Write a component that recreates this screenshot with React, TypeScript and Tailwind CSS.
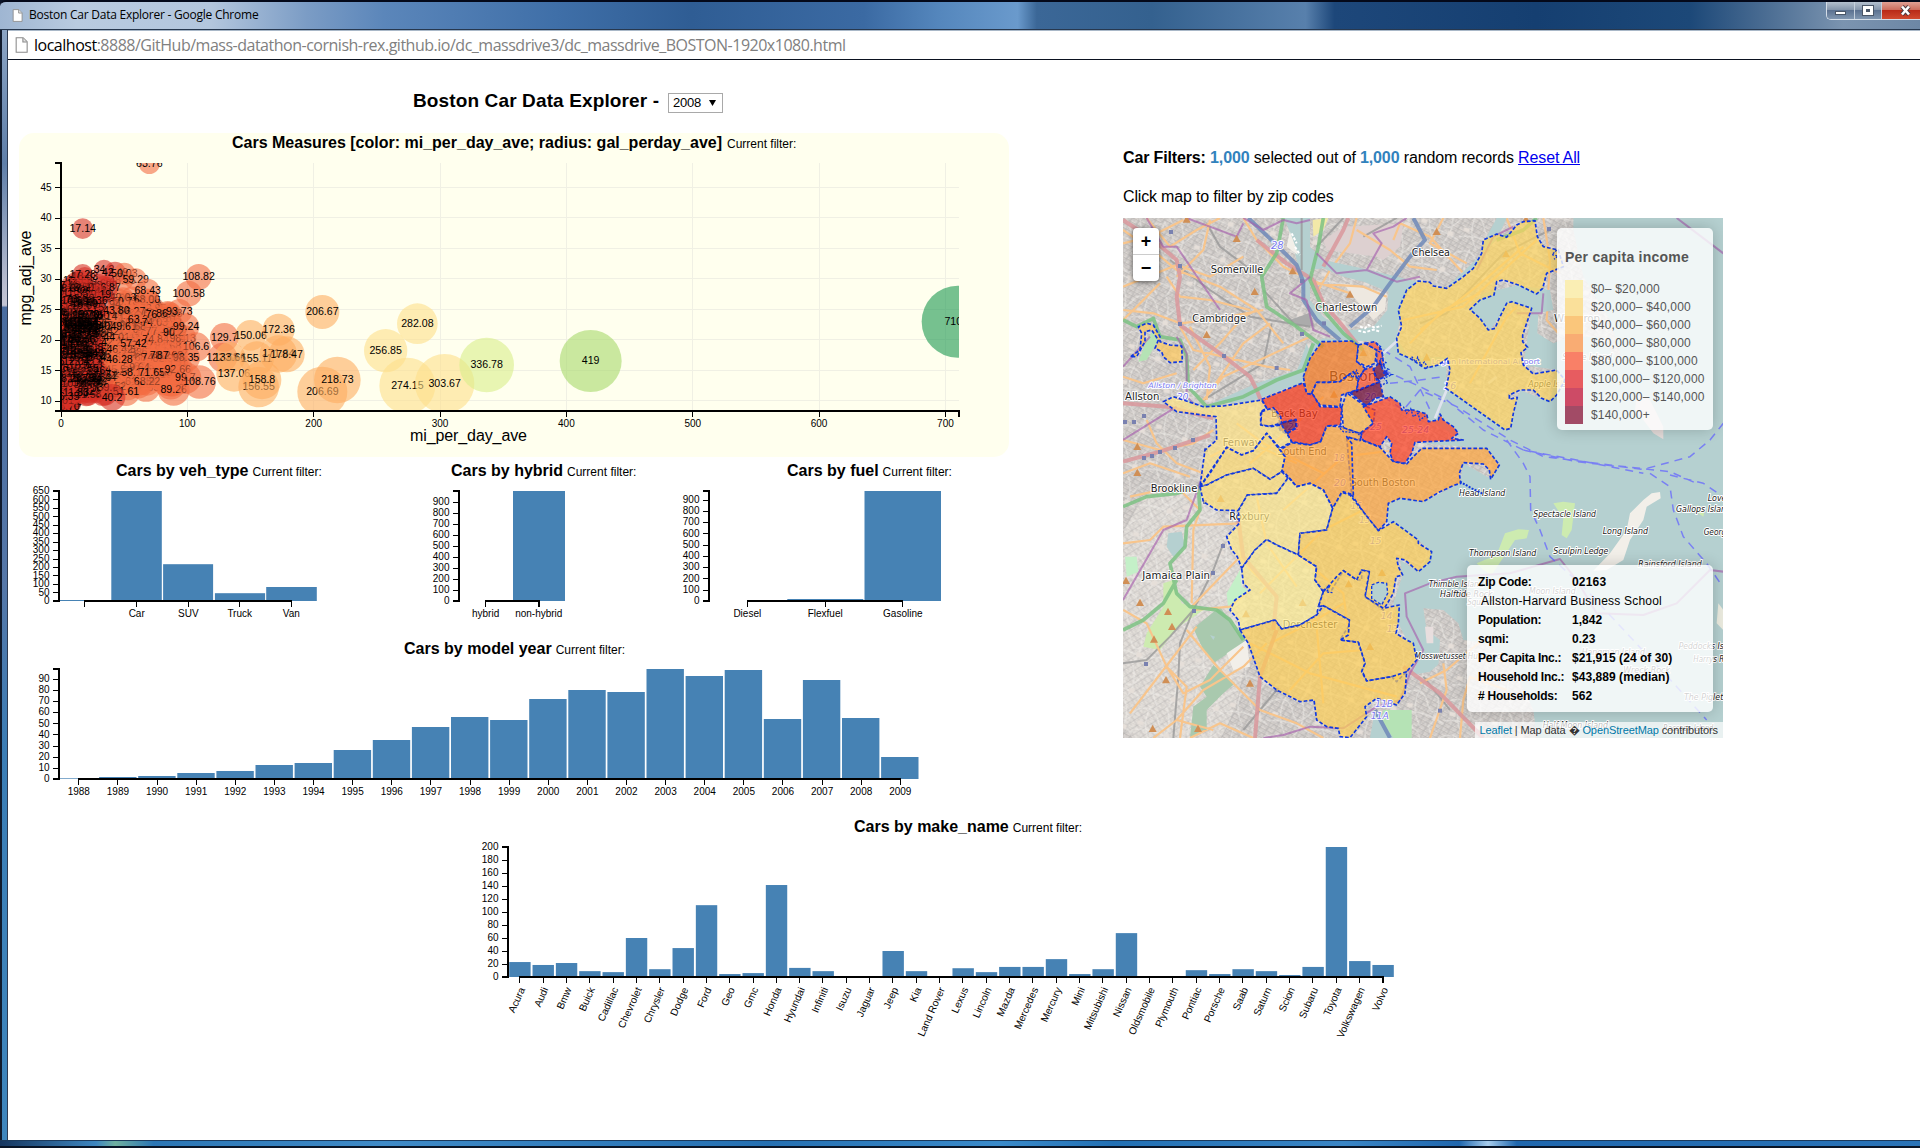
import React from "react";

const R = "#d73027";
const O = "#f46d43";
const A = "#fdae61";
const Y = "#fee08b";
const BAR = "#4682b4";
const ARIAL = "'Liberation Sans', Arial, sans-serif";

/* ---------- shared chart pieces ---------- */

function ChartTitle({ title, className }: { title: string; className: string }) {
  return (
    <div className={"h-7 pt-[4px] whitespace-nowrap leading-5 text-black " + className}>
      <strong className="text-[16px]">{title}</strong>
      <span className="ml-1 text-[12px]">Current filter:</span>
    </div>
  );
}

function YAxis({ x, top, bottom, ticks }: { x: number; top: number; bottom: number; ticks: [number, number][] }) {
  return (
    <g>
      <path d={`M${x - 6} ${top}H${x}V${bottom}H${x - 6}`} fill="none" stroke="#000" strokeWidth={2} />
      {ticks.map(([v, y]) => (
        <g key={v}>
          <line x1={x - 6} x2={x} y1={Math.round(y) + 0.5} y2={Math.round(y) + 0.5} stroke="#000" />
          <text x={x - 9.5} y={y + 3.2} fontSize={10} textAnchor="end">{v}</text>
        </g>
      ))}
    </g>
  );
}

function XAxis({ y, from, to, ticks, labelDy = 16 }: { y: number; from: number; to: number; ticks: [string, number][]; labelDy?: number }) {
  return (
    <g>
      <line x1={from} x2={to} y1={y} y2={y} stroke="#000" strokeWidth={2} />
      {ticks.map(([t, x], i) => (
        <g key={i}>
          <line x1={Math.floor(x) + 0.5} x2={Math.floor(x) + 0.5} y1={y} y2={y + 6} stroke="#000" />
          <text x={x} y={y + labelDy} fontSize={10} textAnchor="middle">{t}</text>
        </g>
      ))}
    </g>
  );
}

const range = (n: number) => Array.from({ length: n }, (_, i) => i);

/* ---------- bubble chart ---------- */

type Bubble = [number, number, number, string, string];

function makeCluster(): Bubble[] {
  let seed = 4211;
  const rnd = () => {
    seed = (seed * 1664525 + 1013904223) % 4294967296;
    return seed / 4294967296;
  };
  const gauss = () => (rnd() + rnd() + rnd() + rnd() - 2) * 1.7;
  const out: Bubble[] = [];
  for (let i = 0; i < 760; i++) {
    const wide = rnd() < 0.24;
    const v = wide ? 34 + Math.pow(rnd(), 1.2) * 56 : 1 + Math.min(34, Math.abs(gauss()) * 8 + rnd() * 17);
    const cap = v < 12 ? 28.5 + v * 0.15 : v < 45 ? 30.5 : 30.5 - (v - 45) * 0.15;
    let m = 19.3 + gauss() * 5.2;
    const low = v < 10 ? 8.6 : v < 36 ? 10.5 : 12.2;
    if (m > cap) m = cap - rnd() * 6;
    if (m < low) m = low + rnd() * 6;
    out.push([61 + v * 1.263, 411 - (m - 8.4) * 6.105, 9.3 + (0.9 * v) / m, v.toFixed(2), v < 37 ? R : O]);
  }
  return out;
}

const c = (x: number, y: number, r: number, t: string, f: string): Bubble => [x / 3, 120 + y / 3, r / 3, t, f];

const CLUSTER = makeCluster();

const BUBBLES: Bubble[] = [
  c(448, 130, 32, "63.76", O),
  c(248, 326, 31, "17.14", R),
  c(248, 463, 31, "17.28", R),
  c(312, 450, 31, "34.2", R),
  c(345, 458, 33, "42.49", R),
  c(373, 461, 33, "50.03", O),
  c(407, 478, 33, "59.29", O),
  c(443, 512, 36, "68.43", O),
  c(464, 609, 36, "74.03", O),
  c(476, 584, 36, "76.88", O),
  c(508, 582, 37, "86.93", O),
  c(538, 575, 38, "93.73", O),
  c(596, 471, 39, "108.82", O),
  c(566, 521, 39, "100.58", O),
  c(548, 655, 41, "98.13", O),
  c(520, 638, 38, "90.2", O),
  c(558, 620, 40, "99.24", O),
  c(588, 681, 44, "106.6", O),
  c(480, 706, 40, "78.2", O),
  c(510, 706, 40, "87.68", O),
  c(558, 714, 42, "98.35", O),
  c(441, 785, 42, "68.22", O),
  c(455, 757, 42, "71.65", O),
  c(533, 748, 45, "92.66", O),
  c(521, 809, 48, "89.26", O),
  c(556, 774, 48, "99.7", O),
  c(598, 786, 50, "108.76", O),
  c(378, 816, 42, "51.61", O),
  c(336, 832, 40, "40.2", R),
  c(668, 712, 44, "122.68", O),
  c(673, 652, 43, "129.7", O),
  c(690, 712, 46, "133.66", A),
  c(752, 646, 46, "150.06", A),
  c(836, 629, 48, "172.36", A),
  c(770, 716, 52, "155.11", A),
  c(835, 702, 56, "171.64", A),
  c(860, 703, 54, "178.47", A),
  c(702, 762, 53, "137.06", A),
  c(776, 801, 61, "156.55", A),
  c(786, 780, 58, "158.8", A),
  c(967, 576, 51, "206.67", A),
  c(967, 815, 75, "206.69", A),
  c(1012, 780, 70, "218.73", A),
  c(1157, 692, 65, "256.85", Y),
  c(1252, 611, 61, "282.08", Y),
  c(1222, 797, 84, "274.15", Y),
  c(1334, 791, 89, "303.67", Y),
  c(1460, 735, 82, "336.78", "#d9ef8b"),
  c(1772, 723, 93, "419", "#a6d96a"),
  c(2873, 605, 108, "710.4", "#1a9850"),
];

function Bubbles({ data }: { data: Bubble[] }) {
  return (
    <>
      {data.map(([x, y, r, t, f], i) => (
        <g key={i}>
          <circle cx={x} cy={y} r={r} fill={f} fillOpacity={0.6} />
          <text x={x} y={y + 3.2} fontSize={10.6} textAnchor="middle">{t}</text>
        </g>
      ))}
    </>
  );
}

function BubbleChart() {
  const xt = range(8).map((i): [string, number] => [String(i * 100), 61 + i * 126.35]);
  const yt = range(8).map((i): [number, number] => [10 + i * 5, 400.8 - i * 30.5]);
  return (
    <section className="ml-[11px] h-[324px] w-[990px] rounded-[15px] bg-[#ffffee]">
      <div className="h-[27px] pl-[213px] leading-[20px] whitespace-nowrap">
        <strong className="text-[16px]">Cars Measures [color: mi_per_day_ave; radius: gal_perday_ave]</strong>
        <span className="ml-[5px] text-[12px]">Current filter:</span>
      </div>
      <svg className="block" width={990} height={297} viewBox="19 160 990 297" fontFamily={ARIAL}>
        <defs>
          <clipPath id="plot"><rect x={61} y={163} width={898} height={247.5} /></clipPath>
        </defs>
        {xt.slice(1).map(([t, x]) => <line key={t} x1={Math.floor(x) + 0.5} x2={Math.floor(x) + 0.5} y1={163} y2={411} stroke="#f0f0e4" />)}
        {yt.map(([t, y]) => <line key={t} x1={61} x2={959} y1={Math.floor(y) + 0.5} y2={Math.floor(y) + 0.5} stroke="#f0f0e4" />)}
        <g clipPath="url(#plot)">
          <Bubbles data={CLUSTER} />
          {CLUSTER.filter((b, i) => i % 6 === 0 && b[0] < 106).map(([x, y, , t], i) => (
            <text key={i} x={x} y={y + 3.2} fontSize={10.6} textAnchor="middle" fillOpacity={0.7}>{t}</text>
          ))}
          <Bubbles data={BUBBLES} />
        </g>
        <YAxis x={61} top={163} bottom={411} ticks={yt} />
        <XAxis y={411} from={60} to={960} ticks={xt} />
        <line x1={959} x2={959} y1={410} y2={417} stroke="#000" strokeWidth={2} />
        <text x={468.5} y={440.5} fontSize={16} textAnchor="middle" textLength={117}>mi_per_day_ave</text>
        <text transform="translate(31 278) rotate(-90)" fontSize={16} textAnchor="middle" textLength={95}>mpg_adj_ave</text>
      </svg>
    </section>
  );
}

/* ---------- bar charts ---------- */

type Rect = [number, number, number];

function Bars({ bars, bottom }: { bars: Rect[]; bottom: number }) {
  return (
    <g>
      {bars.map(([x, w, y], i) => <rect key={i} x={x} y={y} width={w} height={bottom - y} fill={BAR} />)}
    </g>
  );
}

function VehType() {
  return (
    <section className="w-[432px]">
      <ChartTitle title="Cars by veh_type" className="pl-[108px]" />
      <svg className="block" width={432} height={150} viewBox="8 485 432 150" fontFamily={ARIAL}>
        <Bars bottom={601} bars={[[60, 50, 600], [111.3, 50.5, 491], [163.1, 50, 564.2], [214.9, 50.2, 593.2], [266.2, 50.6, 587]]} />
        <YAxis x={59} top={491} bottom={601} ticks={range(14).map((i): [number, number] => [i * 50, 600.8 - i * 8.45])} />
        <XAxis y={601} from={84} to={292} ticks={[["", 84.4], ["Car", 136.7], ["SUV", 188.3], ["Truck", 239.7], ["Van", 291.3]]} />
      </svg>
    </section>
  );
}

function Hybrid() {
  return (
    <section className="w-[250px]">
      <ChartTitle title="Cars by hybrid" className="pl-[11px]" />
      <svg className="block overflow-visible" width={250} height={150} viewBox="440 485 250 150" fontFamily={ARIAL}>
        <Bars bottom={601} bars={[[513, 52, 491]]} />
        <YAxis x={459} top={491} bottom={601} ticks={range(10).map((i): [number, number] => [i * 100, 600.8 - i * 11])} />
        <XAxis y={601} from={485} to={540} ticks={[["hybrid", 485.6], ["non-hybrid", 538.8]]} />
        <line x1={539} x2={539} y1={600} y2={607} stroke="#000" strokeWidth={2} />
      </svg>
    </section>
  );
}

function Fuel() {
  return (
    <section className="w-[325px]">
      <ChartTitle title="Cars by fuel" className="pl-[97px]" />
      <svg className="block overflow-visible" width={325} height={150} viewBox="690 485 325 150" fontFamily={ARIAL}>
        <Bars bottom={601} bars={[[787.3, 76, 599], [864.5, 76.5, 491]]} />
        <YAxis x={709} top={491} bottom={601} ticks={range(10).map((i): [number, number] => [i * 100, 600.8 - i * 11.22])} />
        <XAxis y={601} from={747} to={903} ticks={[["Diesel", 747.3], ["Flexfuel", 825.2], ["Gasoline", 902.8]]} />
      </svg>
    </section>
  );
}

const YEAR_TOPS = [985, 981, 978, 969, 963, 945, 939, 900, 870, 831, 801, 810, 747, 720, 726, 657, 678, 660, 807, 690, 804, 921];

function ModelYear() {
  return (
    <section>
      <ChartTitle title="Cars by model year" className="pl-[396px]" />
      <svg className="block" width={1007} height={150} viewBox="8 663 1007 150" fontFamily={ARIAL}>
        <Bars bottom={779} bars={YEAR_TOPS.map((t, i): Rect => [60 + i * 39.1, 37.4, 450 + t / 3])} />
        <YAxis x={59} top={669} bottom={779} ticks={range(10).map((i): [number, number] => [i * 10, 778.8 - i * 11.1])} />
        <XAxis y={779} from={78} to={901} ticks={YEAR_TOPS.map((_, i): [string, number] => [String(1988 + i), 78.8 + i * 39.12])} />
      </svg>
    </section>
  );
}

const MAKES: [string, number][] = [
  ["Acura", 23], ["Audi", 18.5], ["Bmw", 21.5], ["Buick", 9], ["Cadillac", 7.5], ["Chevrolet", 60], ["Chrysler", 12],
  ["Dodge", 44.5], ["Ford", 110.5], ["Geo", 4.5], ["Gmc", 6], ["Honda", 141.5], ["Hyundai", 14], ["Infiniti", 9],
  ["Isuzu", 1], ["Jaguar", 1], ["Jeep", 40], ["Kia", 9], ["Land Rover", 1], ["Lexus", 13.5], ["Lincoln", 7.5],
  ["Mazda", 15.5], ["Mercedes", 15.5], ["Mercury", 27.5], ["Mini", 4.5], ["Mitsubishi", 12], ["Nissan", 67.5],
  ["Oldsmobile", 1], ["Plymouth", 1], ["Pontiac", 10.5], ["Porsche", 4.5], ["Saab", 12], ["Saturn", 9], ["Scion", 3],
  ["Subaru", 15.5], ["Toyota", 200], ["Volkswagen", 24.5], ["Volvo", 18.5],
];

function MakeName() {
  return (
    <section className="ml-[452px] w-[960px]">
      <ChartTitle title="Cars by make_name" className="pl-[394px]" />
      <svg className="block" width={960} height={260} viewBox="460 841 960 260" fontFamily={ARIAL}>
        <Bars bottom={977} bars={MAKES.map(([, v], i): Rect => [509.2 + i * 23.33, 21.4, 977 - v * 0.65])} />
        <YAxis x={508} top={847} bottom={977} ticks={range(11).map((i): [number, number] => [i * 20, 976.8 - i * 12.98])} />
        <XAxis y={977} from={519} to={1384} ticks={MAKES.map((_, i): [string, number] => ["", 519.7 + i * 23.33])} />
        <line x1={1383} x2={1383} y1={976} y2={983} stroke="#000" strokeWidth={2} />
        {MAKES.map(([m], i) => (
          <text key={m} transform={`translate(${525.2 + i * 23.33} ${989.2}) rotate(-66)`} fontSize={10.2} textAnchor="end">{m}</text>
        ))}
      </svg>
    </section>
  );
}

/* ---------- map ---------- */

const LAND = [
  "M39 24H525L545 90 560 150 575 210 590 270 620 330 660 370 700 390 640 385 605 400 560 480 440 520 300 582 420 575 580 515 600 445 635 395 725 393 800 393 825 440 822 560 900 600 1060 690 930 700 1130 715 1170 765 1140 805 1060 760 1050 820 940 875 870 865 835 880 830 935 925 990 965 1025 925 1085 870 1050 878 1095 850 1180 865 1240 890 1290 925 1350 905 1395 960 1385 1000 1350 1040 1400 1060 1584H39Z",
  "M600 180L640 175 700 200 760 215 835 245 832 300 790 350 730 360 690 355 640 320 600 270Z",
  "M600 24L600 110 640 150 780 180 880 205 925 215 1010 232 1060 200 1110 160 1125 90 1160 24Z",
  "M1160 90L1190 24H1390V60L1420 200 1500 330 1540 460 1460 380 1380 380 1330 400 1282 370 1285 310 1330 300 1320 240 1225 225 1120 250 1080 298 1140 360 1200 275 1265 295 1240 465 1340 480 1320 575 1230 540 1200 660 1008 535 1010 440 900 445 860 385 880 265 925 213 1010 232Z",
  "M940 1195L1000 1200 1045 1240 1060 1290 1130 1300 1200 1350 1270 1500 1280 1584H900L930 1400 985 1375 990 1290 950 1260Z",
];

const PARKS = [
  ["#cdebb0", "M160 1120L190 1110 215 1180 280 1200 200 1255 150 1320 100 1310 110 1270 160 1190Z"],
  ["#a9c9ae", "M330 1190L385 1270 410 1290 370 1320 310 1360 280 1320 250 1255Z"],
  ["#a9c9ae", "M310 1365L375 1420 340 1450 290 1500 290 1560 240 1584 250 1490 290 1460 270 1430Z"],
  ["#c4f0c8", "M390 1080L395 1130 415 1140 355 1200 350 1150Z"],
  ["#c4f0c8", "M45 1040L80 1040 85 1085 50 1100Z"],
  ["#b5e3b5", "M820 1500H905V1584H800Z"],
  ["#b5e3b5", "M130 360L145 390 110 450 85 455 110 390Z"],
  ["#cdebb0", "M1330 880L1360 875 1395 880 1385 960 1370 985 1355 975 1360 925Z"],
  ["#cdebb0", "M1100 1060L1160 1035 1185 970 1225 958 1257 960 1250 985 1215 990 1175 1050 1145 1095 1120 1080Z"],
  ["#cdebb0", "M1760 885L1785 895 1780 920 1765 910Z"],
  ["#f2efe9", "M1625 850L1650 846 1652 865 1610 890 1600 930 1560 990 1540 1050 1490 1080 1450 1082 1500 1030 1550 960 1560 910 1600 870Z"],
  ["#e5dcda", "M1580 555L1615 560 1640 610 1660 650 1660 688 1630 670 1600 630 1575 600Z"],
  ["#ecece0", "M1825 1180L1840 1200V1260L1820 1240Z"],
  ["#ddd0d0", "M700 50L880 40 870 110 820 150 800 140 650 120 640 90Z"],
  ["#ababab", "M540 330L600 308 615 350 560 345Z"],
  ["#f3e9a8", "M608 30L655 24 640 60 610 80Z"],
  ["#eee8e0", "M700 220L830 250 825 300 790 330 730 260Z"],
  ["#f2efe9", "M540 60L570 90 570 140 530 110Z"],
  ["#f2efe9", "M350 1330L410 1290 420 1370 370 1380Z"],
  ["#e8dede", "M945 1250H970V1300H950Z"],
];

const WATER = [
  "M175 970L215 965 225 1010 190 1040 170 1010Z",
  "M590 400L560 490 445 530 440 560 290 600 230 560 235 590 300 600 580 520 600 430Z",
  "M525 24H600V180L575 200 560 120Z",
  "M300 1275L315 1280 310 1290Z",
  "M795 1500L850 1584H780Z",
];

const ORANGE_ROADS = [
  "M39 100L120 80 220 30", "M39 60L140 130 200 180 330 230 440 300 520 400", "M110 24L180 110 260 60 330 24", "M39 230L200 165 300 200 400 140",
  "M40 300L130 310 210 340 300 330 460 300", "M210 350L250 420 340 440 470 470 540 480", "M240 350L300 470 290 570", "M280 570L340 500 470 440 600 380",
  "M290 560L400 400 480 340", "M400 24L440 90 520 170 600 210 720 250", "M170 200L210 260 300 270 420 300", "M250 480L330 400 400 320 440 300",
  "M150 220L80 290 39 330", "M300 30L280 120 200 200", "M620 250L660 180 720 100 740 24", "M600 220L760 230 830 260", "M740 60L840 120 900 170 980 180",
  "M850 90L870 40 960 80 1060 190", "M39 500L100 520 200 490", "M39 690L150 720 250 700 310 660", "M110 630L140 700 200 760 280 790",
  "M39 790L120 760 240 800", "M60 860L200 830 270 900 250 960 245 1180", "M39 1000L120 990 160 950 390 940", "M40 1200L110 1240 170 1370 230 1430 210 1584",
  "M245 1190L390 1040", "M230 1260L330 1380 450 1500 560 1540 640 1584", "M60 1510L160 1380 260 1250", "M200 1530L280 1440 400 1370 470 1300",
  "M170 1370L220 1450 300 1410 400 1310", "M240 1584L330 1540 430 1584", "M130 1584L200 1530 310 1560", "M250 1200L360 1190 420 1140", "M390 940L395 1050 500 1160",
  "M1190 24L1230 130 1350 190", "M1300 24L1320 150 1310 330 1345 370", "M1000 24L960 100 1070 160", "M930 1420L1010 1380 1080 1320 1120 1290",
  "M960 1584L1010 1440 1000 1360", "M1050 1584L1060 1470 1080 1400 1190 1440", "M420 760L560 640 640 560", "M520 900L700 740 860 720", "M450 1150L640 960 760 900",
  "M570 1040L700 1150 720 1300", "M480 1300L600 1240 700 1180", "M540 1440L640 1330 760 1320", "M420 1300L600 1390 860 1460", "M440 860L470 1000 560 1130", "M620 1250L640 1480",
  "M880 330L1060 290 1280 90", "M930 360L1100 230 1240 110", "M900 400L1000 300 1110 250", "M1080 520L1190 320 1220 290", "M380 640L460 700 640 790", "M300 740L400 690 560 760",
];

const RED_ROADS = [
  "M39 30L130 90 200 150 210 200 200 260 210 345", "M210 345L330 430 420 500 440 540 460 590", "M610 210L640 280 700 350 740 400",
  "M39 580L170 590 310 625", "M39 755L150 725 300 675", "M640 170L700 60 715 24", "M610 210L530 160 440 90",
  "M450 1400L435 1584", "M500 1260L450 1400", "M880 1370L990 1450 1120 1584", "M385 930L400 1040 500 1160 490 1260",
];

const GREEN_ROADS = [
  "M520 24L500 130 455 200 470 290 560 350 640 410", "M640 24L625 110 600 210 640 300 700 370 760 420", "M39 330L80 350 130 325 150 380 210 390 230 440 235 530 290 590 400 560 500 510 580 480 610 400",
  "M39 890L110 860 200 850 265 830 270 900 230 950 225 1010 180 1060 200 1150 240 1190 320 1200 360 1230 400 1290", "M200 1110L160 1180 100 1230 39 1260", "M1280 24L1240 60 1160 90",
];

const BLUE_ROADS = ["M415 24L500 105 560 165 580 215 580 270 620 330 690 390", "M910 24L945 90 900 140 840 220 790 290 720 350", "M795 1500L840 1584"];

const PURPLE = [
  "M39 690L200 590", "M39 470L120 380", "M39 1170L160 960 230 930 280 790", "M230 24L380 80 400 40", "M110 24L160 110 200 110 330 300", "M400 24L460 60 520 30 560 40 600 30 M600 200L540 250 590 270",
  "M590 270L610 360 660 380", "M620 130L680 190 770 180 860 215 930 200", "M770 180L815 100 790 70 850 50 890 24", "M460 1584L520 1575 600 1550 700 1555 800 1490 870 1470 900 1390 940 1320 890 1220 885 1150 960 1120 1040 1100 1200 1090 1350 1047 1400 1110 1460 1210 1600 1215 1700 1180 1800 1080 1840 1085",
  "M1100 180L1150 80 1210 50", "M1700 24L1840 130", "M200 380L230 430 230 560 260 590", "M1300 250L1295 310 1220 310",
];

const GREY = ["M290 40L330 110 410 170 460 200", "M180 150L300 240 420 320 600 350", "M460 240L560 350", "M575 24V180", "M485 340L460 460 280 570", "M39 1360L110 1350 180 1280 250 1200 310 1080 340 1000", "M250 1200L210 1300 205 1400 190 1584", "M400 1560L500 1440", "M700 24L620 110", "M860 24L760 80", "M930 340L1010 310 1180 130 1320 60", "M940 1400L1020 1500"];

const FERRY = [
  "M820 560L880 600 930 540 1040 590 1120 640 1200 690 1300 740 1500 765 1680 785 1760 820", "M820 480L930 530 1010 570 1120 660 1240 720 1400 750 1600 790", "M1190 690L1240 760 1260 800 1262 900 1290 960 1320 1040 1420 1130 1560 1280 1700 1430 1790 1530",
  "M1240 720L1400 755 1600 778 1740 740 1800 690 1840 640", "M820 420L900 470 960 600", "M840 520L930 510 1000 500", "M1620 790L1680 830 1690 900 1720 980 1790 1060 1838 1130", "M1680 795L1780 820 1840 860",
];

const ZIPS: [string, string][] = [
  ["#fec85a", "M62 440L90 420 95 370 85 350 110 340 130 345 150 380 150 395 180 405 215 408 217 455 180 458 160 440 155 425 135 415 145 390 125 360 105 365 105 395 80 440Z"],
  ["#fed45e", "M880 265L890 240 925 213 960 217 970 228 1010 235 1060 200 1090 175 1115 130 1120 90 1160 72 1190 82 1220 45 1240 35 1275 32 1282 80 1300 110 1345 120 1360 170 1310 190 1298 235 1280 252 1225 225 1180 210 1160 215 1152 255 1110 270 1080 298 1110 325 1135 360 1155 355 1170 320 1190 280 1205 275 1265 295 1238 375 1238 395 1253 412 1233 428 1240 465 1270 492 1340 480 1365 510 1340 555 1320 575 1295 565 1270 540 1230 540 1198 555 1198 568 1222 562 1210 610 1202 655 1185 660 1100 600 1008 535 1020 480 1012 445 985 465 945 475 900 445 865 430 860 385 875 350 865 300Z"],
  ["#f5761c", "M580 500L600 445 635 395 725 393 745 405 740 455 765 475 745 510 730 485 690 515 655 517 620 517 605 550 590 552Z"],
  ["#fb8a2c", "M605 550L620 517 655 517 690 515 730 485 745 510 740 540 695 555 690 590 630 585Z"],
  ["#feab45", "M745 405L765 400 800 420 795 460 770 470 740 455Z"],
  ["#fc4e2a", "M765 400L795 395 815 420 822 470 800 455 800 420Z"],
  ["#fc4e2a", "M762 480L788 468 798 500 810 515 740 545 745 510Z"],
  ["#6a0030", "M810 452L818 480 835 490 815 505 800 510 790 480Z"],
  ["#6a0030", "M720 548L810 515 820 560 795 565 770 588Z"],
  ["#feb64c", "M695 592L710 548 765 588 795 600 790 640 755 672 700 655Z"],
  ["#f93415", "M455 568L580 518 590 550 610 555 630 590 695 592 692 645 650 648 632 695 600 705 545 695 530 670 558 655 558 630 510 640 500 605 470 595Z"],
  ["#6a0030", "M503 640L558 628 560 650 530 672 510 660Z"],
  ["#fed070", "M455 605L490 593 512 620 515 640 480 648 452 645Z"],
  ["#ff3d1e", "M760 590L800 575 840 560 870 580 875 600 910 600 950 612 955 635 985 630 990 612 1000 630 1030 650 1045 670 1025 685 1060 690 915 697 905 730 885 760 850 755 840 730 845 700 830 680 810 710 755 690 750 670 790 640Z"],
  ["#ffa53c", "M710 680L755 690 810 712 850 755 890 762 905 745 935 715 1130 715 1168 765 1142 808 1138 780 1120 762 1060 758 1048 790 1052 820 1035 825 990 845 940 875 870 865 835 880 830 935 805 962 770 920 725 855Z"],
  ["#ffa53c", "M632 695L650 648 692 650 755 672 750 692 710 680 725 700 730 855 700 845 668 895 640 840 600 820 560 830 535 800 515 780 525 740 510 720 545 698 600 705Z"],
  ["#ffe283", "M160 575L190 560 280 590 340 588 455 570 470 595 452 605 452 645 480 650 515 645 530 670 545 695 510 715 470 670 430 722 395 735 350 712 290 800 270 830 285 720 320 690 318 620 200 605Z"],
  ["#ffdc70", "M270 830L300 790 350 712 395 735 430 722 470 670 510 720 525 740 515 785 480 808 430 775 350 795 290 825Z"],
  ["#ffdf78", "M270 830L290 825 350 795 430 775 480 808 515 785 535 805 500 850 412 855 385 902 320 900 280 875Z"],
  ["#ffe88c", "M385 902L412 855 500 850 535 802 560 830 600 820 640 840 668 895 650 960 570 970 565 1035 500 1005 470 990 435 1020 395 1075 382 1040 365 1020 350 980 388 940Z"],
  ["#ffed90", "M395 1075L435 1020 470 988 500 1005 565 1035 620 1070 615 1110 640 1145 625 1190 620 1215 570 1245 515 1257 495 1230 390 1260 385 1230 360 1200 375 1170 420 1140 400 1120Z"],
  ["#fecf55", "M565 1035L570 970 650 960 668 895 695 847 720 855 805 962 850 935 925 990 925 1000 965 1025 960 1055 925 1085 885 1050 860 1045 865 1070 878 1095 858 1100 850 1150 820 1200 765 1160 778 1085 755 1080 755 1110 740 1110 700 1082 665 1140 640 1145 615 1110 620 1070Z"],
  ["#fecf55", "M640 1145L680 1100 700 1082 740 1110 755 1080 778 1085 765 1160 820 1195 868 1185 865 1240 858 1270 890 1290 910 1300 920 1350 890 1385 860 1415 845 1400 770 1413 755 1380 765 1360 745 1297 690 1290 715 1250 718 1230 640 1187 625 1190Z"],
  ["#fecf55", "M390 1260L495 1230 515 1257 570 1245 620 1215 640 1187 718 1230 715 1275 690 1290 745 1297 765 1360 755 1385 770 1413 845 1400 890 1385 885 1450 860 1485 800 1465 765 1490 770 1520 720 1583 690 1580 685 1555 650 1550 620 1530 612 1470 570 1475 500 1440 450 1400 415 1300Z"],
];

const PLACES: [string, number, number, number, number][] = [
  ["Somerville", 302, 188, 158, 30], ["Cambridge", 247, 335, 161, 30], ["Charlestown", 616, 303, 186, 30], ["Chelsea", 905, 138, 115, 30],
  ["Allston", 45, 569, 103, 30], ["Brookline", 122, 847, 140, 30], ["Jamaica Plain", 97, 1107, 203, 30], ["Roxbury", 358, 930, 121, 30],
  ["Back Bay", 483, 622, 140, 30], ["Fenway", 338, 709, 114, 30], ["South End", 502, 734, 148, 30], ["South Boston", 722, 828, 194, 30],
  ["Dorchester", 518, 1255, 164, 30], ["Winthrop", 1332, 336, 138, 30], ["Boston", 657, 512, 142, 40],
];

const ISLETS: [string, number, number, number][] = [
  ["Head Island", 1047, 858, 139], ["Spectacle Island", 1270, 921, 188], ["Long Island", 1478, 973, 136], ["Sculpin Ledge", 1330, 1031, 165],
  ["Thompson Island", 1077, 1038, 202], ["Rainsford Island", 1585, 1070, 190], ["Gallops Island", 1698, 907, 165], ["Lovells Island", 1793, 874, 160],
  ["Georges Island", 1781, 975, 165], ["Thimble Island", 956, 1130, 165], ["Halftide Rock", 990, 1160, 158], ["Squantum", 1072, 1186, 110], ["Moon Island", 1257, 1152, 140],
  ["Hangman Island", 1415, 1334, 190], ["Wreck Rock", 1540, 1388, 140], ["Peddocks Island", 1706, 1316, 185], ["Harrys Rock", 1750, 1357, 130],
  ["The Piglets", 1722, 1471, 130], ["Half Moon Island", 1298, 1553, 196], ["Mosswetusset Hummock", 914, 1348, 270], ["Snake Island", 1357, 451, 150],
  ["Apple Island", 1255, 530, 145], ["Raccoon Island", 1660, 1562, 150],
];

const ROUTES: [string, number, number, number][] = [
  ["28", 483, 118, 30], ["20", 200, 571, 28], ["20-", 765, 571, 26], ["22", 533, 661, 28], ["25", 780, 661, 28], ["25-24", 876, 670, 28], ["18", 672, 754, 26],
  ["20", 672, 827, 28], ["16", 722, 898, 26], ["15", 748, 939, 26], ["15", 779, 1003, 28], ["14", 812, 1226, 28], ["13", 830, 1265, 28], ["26", 1003, 538, 28],
];

const PEAKS = [[230, 28], [380, 86], [434, 245], [548, 183], [720, 253], [290, 374], [980, 65], [82, 710], [82, 788], [672, 553], [760, 428], [48, 1112], [90, 1178], [174, 1205], [186, 1250], [132, 1288], [168, 1410], [420, 1420], [128, 1556], [264, 1556], [332, 866], [578, 1178], [408, 1212], [716, 1122], [816, 1088], [780, 1310], [950, 442], [1188, 132], [1248, 28]];
const STATIONS = [[183, 66], [210, 168], [210, 342], [342, 438], [500, 474], [576, 372], [576, 213], [642, 340], [45, 636], [72, 636], [102, 618], [102, 744], [126, 738], [150, 726], [195, 714], [249, 690], [288, 720], [339, 1008], [309, 1089], [252, 1203], [108, 1362], [500, 1440], [285, 876], [1317, 57], [990, 1502]];

function Lines({ d, color, width, opacity = 1, dash }: { d: string[]; color: string; width: number; opacity?: number; dash?: string }) {
  return <path d={d.join("")} fill="none" stroke={color} strokeWidth={width} strokeOpacity={opacity} strokeLinejoin="round" strokeDasharray={dash} />;
}

function MapArt() {
  return (
    <svg className="block" width={600} height={520} viewBox="39 24 1800 1560" fontFamily="'DejaVu Sans', sans-serif">
      <defs>
        <pattern id="st1" width={22} height={13} patternUnits="userSpaceOnUse" patternTransform="rotate(28)">
          <rect width={22} height={13} fill="#dcd7d2" />
          <path d="M0 2H22M3 0V13" stroke="#bcb9b7" strokeWidth={3} />
          <path d="M0 8H22M14 2V8" stroke="#cbc8c6" strokeWidth={2} />
        </pattern>
        <pattern id="st2" width={27} height={18} patternUnits="userSpaceOnUse" patternTransform="rotate(-32)">
          <path d="M0 4H27M6 0V18M18 4V14" stroke="#b2afae" strokeWidth={2.2} strokeOpacity={0.6} />
        </pattern>
        <pattern id="st3" width={130} height={110} patternUnits="userSpaceOnUse" patternTransform="rotate(12)">
          <path d="M0 20Q50 -10 70 40T130 20M40 0Q20 60 60 110M90 0Q120 60 85 110M0 80Q60 60 130 90" fill="none" stroke="#f4f1ee" strokeWidth={4} strokeOpacity={0.5} />
          <path d="M10 50h18v12h-18zM95 70h16v14h-16z" fill="#e6dfd9" />
        </pattern>
        <clipPath id="land"><path d={LAND.join("")} /></clipPath>
      </defs>
      <rect x={39} y={24} width={1800} height={1560} fill="#b5d0d0" />
      <path d={LAND.join("")} fill="url(#st1)" />
      <g clipPath="url(#land)">
        <ellipse cx={200} cy={1250} rx={210} ry={430} fill="#f0ece6" fillOpacity={0.5} />
        <rect x={39} y={24} width={1500} height={1560} fill="url(#st2)" />
        <rect x={39} y={24} width={1500} height={1560} fill="url(#st3)" />
      </g>
      {PARKS.map(([f, d], i) => <path key={i} d={d} fill={f} />)}
      {WATER.map((d, i) => <path key={i} d={d} fill="#b5d0d0" />)}
      <Lines d={GREY} color="#999" width={6} opacity={0.8} />
      <g clipPath="url(#land)"><Lines d={ORANGE_ROADS} color="#f8c58c" width={6.5} /></g>
      <Lines d={RED_ROADS} color="#d9989c" width={12} opacity={0.85} />
      <Lines d={GREEN_ROADS} color="#7cc284" width={11} opacity={0.85} />
      <Lines d={BLUE_ROADS} color="#7089b8" width={12} opacity={0.85} />
      <Lines d={PURPLE} color="#a65fae" width={6} opacity={0.65} />
      <Lines d={FERRY} color="#6666ff" width={4.5} opacity={0.75} dash="24 18" />
      <path d="M1010 540L975 625M820 430L870 385M1135 520L1160 500" stroke="#dfe3ee" strokeWidth={8} fill="none" />
      <path d="M750 350l15 5 10 -10 20 8 20 -6M745 362l20 5 25 -8 20 6M545 70l15 30M555 110l15 25" stroke="#fff" strokeWidth={6} strokeDasharray="9 5" fill="none" />
      {PEAKS.map(([x, y], i) => <path key={i} d={`M${x - 12} ${y + 10}L${x} ${y - 12}L${x + 12} ${y + 10}Z`} fill="#d08f55" />)}
      {STATIONS.map(([x, y], i) => <rect key={i} x={x - 6} y={y - 6} width={12} height={12} fill="#7981b0" />)}
      <g stroke="#fff" strokeWidth={6} strokeLinejoin="round" style={{ paintOrder: "stroke" }}>
        {PLACES.map(([t, x, y, w, s]) => <text key={t} x={x} y={y} textLength={w} lengthAdjust="spacingAndGlyphs" fontSize={s} fill="#222">{t}</text>)}
        <g fontStyle="italic" fontSize={25} fill="#1a1a1a">
          {ISLETS.map(([t, x, y, w]) => <text key={t} x={x} y={y} textLength={w} lengthAdjust="spacingAndGlyphs">{t}</text>)}
        </g>
        <g fontStyle="italic" fill="#7777f0">
          {ROUTES.map(([t, x, y, s], i) => <text key={i} x={x} y={y} fontSize={s}>{t}</text>)}
          <text x={115} y={533} fontSize={23} textLength={205} lengthAdjust="spacingAndGlyphs">Allston / Brighton</text>
          <text x={965} y={462} fontSize={21} fontStyle="normal" textLength={325} lengthAdjust="spacingAndGlyphs">Logan International Airport</text>
        </g>
      </g>
      {ZIPS.map(([f, d], i) => (
        <path key={i} d={d} fill={f} fillOpacity={0.7} stroke="#1038e0" strokeWidth={5} strokeDasharray="11 6" strokeLinejoin="round" />
      ))}
      <path d="M785 1125L805 1117 830 1120 833 1150 815 1185 785 1165Z" fill="#b5d0d0" stroke="#1038e0" strokeWidth={4} strokeDasharray="9 6" />
      <g fill="none" stroke="#1038e0" strokeWidth={4} strokeDasharray="6 4">
        <path d="M800 400l12 10 -6 14 14 8 -8 16 16 10 -14 12 22 8 -18 12 28 4 -24 10 12 14 -18 6M700 505l20 -14 8 12 12 -22 6 18 14 -12M905 440l12 16 6 -14 10 24 10 -10 12 18M880 590l10 20 12 -14 8 24 14 -10 6 20 16 -12M1340 120l-14 14 18 4 -12 10" />
        <path d="M1050 815L1085 835 1120 852" strokeWidth={6} />
        <path d="M690 655L700 665 742 668 760 690M640 1140l18 -10 -8 16 20 2" />
      </g>
      <g stroke="#fff" strokeWidth={5} fontStyle="italic" fontSize={28} fill="#7777f0" style={{ paintOrder: "stroke" }}>
        <text x={795} y={1490}>11B</text>
        <text x={782} y={1526}>11A</text>
      </g>
    </svg>
  );
}

const LEGEND: [string, string][] = [
  ["bg-[#faeeb4]", "$0– $20,000"], ["bg-[#fae09a]", "$20,000– $40,000"], ["bg-[#fac67b]", "$40,000– $60,000"], ["bg-[#f9ac73]", "$60,000– $80,000"],
  ["bg-[#f98067]", "$80,000– $100,000"], ["bg-[#e75c60]", "$100,000– $120,000"], ["bg-[#cd4b66]", "$120,000– $140,000"], ["bg-[#a24b66]", "$140,000+"],
];

const INFO: [string, string][] = [
  ["Population:", "1,842"], ["sqmi:", "0.23"], ["Per Capita Inc.:", "$21,915 (24 of 30)"], ["Household Inc.:", "$43,889 (median)"], ["# Households:", "562"],
];

function CityMap() {
  return (
    <div className="relative h-[520px] w-[600px] overflow-hidden">
      <MapArt />
      <div className="absolute top-[10px] left-[10px] flex w-[26px] flex-col overflow-hidden rounded-[4px] bg-white text-center text-[18px] font-bold text-black shadow-[0_1px_5px_rgba(0,0,0,0.65)]">
        <span className="h-[27px] border-b border-[#ccc] leading-[26px]">+</span>
        <span className="h-[26px] leading-[27px]">−</span>
      </div>
      <div className="absolute top-[10px] right-[10px] h-[202px] w-[156px] rounded-[5px] bg-white/80 px-2 text-[#555] shadow-[0_0_15px_rgba(0,0,0,0.2)]">
        <h4 className="pt-[19px] text-[14px] leading-5 font-bold tracking-[0.25px] whitespace-nowrap">Per capita income</h4>
        <div className="mt-[13px] flex flex-col">
          {LEGEND.map(([bg, t]) => (
            <div key={t} className="flex h-[18px] items-center whitespace-nowrap">
              <i className={"mr-2 block h-[18px] w-[18px] " + bg} />
              <span className="text-[12px] tracking-[0.2px]">{t}</span>
            </div>
          ))}
        </div>
      </div>
      <div className="absolute right-[10px] bottom-[26px] h-[147px] w-[246px] rounded-[5px] bg-white/80 pt-[8px] pl-[11px] text-[12px] leading-[19px] font-bold whitespace-nowrap text-black shadow-[0_0_15px_rgba(0,0,0,0.2)]">
        <div className="flex"><span className="w-[94px] tracking-[-0.2px]">Zip Code:</span><span className="tracking-[0.2px]">02163</span></div>
        <div className="pl-[3px] font-normal tracking-[0.2px]">Allston-Harvard Business School</div>
        {INFO.map(([k, v]) => (
          <div key={k} className="flex"><span className="w-[94px] tracking-[-0.25px]">{k}</span><span className="tracking-[0.05px]">{v}</span></div>
        ))}
      </div>
      <div className="absolute right-0 bottom-0 h-4 bg-white/70 px-[5px] text-[11px] leading-4 tracking-[-0.1px] whitespace-nowrap text-[#333]">
        <span className="text-[#0078a8]">Leaflet</span> | Map data � <span className="text-[#0078a8]">OpenStreetMap</span> contributors
      </div>
    </div>
  );
}

/* ---------- window chrome ---------- */

function PageIcon({ w, h }: { w: number; h: number }) {
  return (
    <svg width={w} height={h} viewBox="0 0 12 15">
      <path d="M1 .7H7.5L11.3 4.5V14.3H1Z" fill="#fff" stroke="#8a8a8a" />
      <path d="M7.3 .9V4.7H11" fill="#e4e4e4" stroke="#8a8a8a" />
    </svg>
  );
}

function TitleBar() {
  return (
    <header className="flex h-[30px] items-start justify-between rounded-tl-[6px] border-t-2 border-b border-t-[#04091a] border-b-[#27384f] bg-[linear-gradient(90deg,#9fb6d2_0%,#b9cbe0_4%,#b3c6dd_11%,#7b9cc5_16%,#5b86ba_20%,#3f6fa8_29%,#2f5d94_36%,#3b6aa3_45%,#5587bd_49%,#6a9acc_53%,#3b6797_54%,#34618f_60%,#5880ac_68%,#1d477a_69.5%,#153f71_80%,#1c4878_88%,#4b6d93_92%,#7b94b0_96%,#6d87a5_100%)] pl-3">
      <div className="flex h-[26px] items-center">
        <PageIcon w={11} h={13} />
        <span className="ml-[6px] font-['Open_Sans','Noto_Sans',sans-serif] text-[12px] tracking-[-0.24px] text-black">Boston Car Data Explorer - Google Chrome</span>
      </div>
      <div className="flex h-[18px] w-[94px] overflow-hidden rounded-bl-[5px] border-b border-l border-[#d4dde8]">
        <div className="flex w-7 items-center justify-center border-r border-[#c5d0dd] bg-[linear-gradient(#b4c0cf,#8293aa_48%,#5c7291_50%,#8096b0)]">
          <span className="mt-1 h-[4px] w-[11px] border border-[#4a5668] bg-white" />
        </div>
        <div className="flex w-[27px] items-center justify-center border-r border-[#c5d0dd] bg-[linear-gradient(#b4c0cf,#8293aa_48%,#5c7291_50%,#8096b0)]">
          <span className="h-[9px] w-[10px] border-[3px] border-white bg-[#4a5668] outline outline-[#4a5668]" />
        </div>
        <div className="flex flex-1 items-center justify-center bg-[linear-gradient(#e0a094,#cc6a5a_48%,#b92a18_50%,#d0492f)] pl-2">
          <svg width={13} height={11} viewBox="0 0 13 11"><path d="M3 1.5L10 9.5M10 1.5L3 9.5" stroke="#4a3a40" strokeWidth={4.4} /><path d="M3 1.5L10 9.5M10 1.5L3 9.5" stroke="#fff" strokeWidth={2.6} /></svg>
        </div>
      </div>
    </header>
  );
}

export default function App() {
  return (
    <div className="flex h-[1148px] w-[1920px] flex-col overflow-hidden bg-[#0a1428] font-['Liberation_Sans',Arial,sans-serif] text-black">
      <TitleBar />
      <div className="flex h-[1110px]">
        <div className="w-2 shrink-0 border-r border-l-2 border-r-[#2c3a52] border-l-[#101a2c] bg-[linear-gradient(#8ba4c4,#5f7fa9_12%,#b9bdcf_23%,#c3c5d4_24.8%,#4a6da0_25%,#5577a8_50%,#3b7db5_65%,#3f86bd)]" />
        <div className="flex flex-1 flex-col bg-white">
          <div className="flex h-[30px] shrink-0 items-center border-t border-b border-t-[#a9b8c8] border-b-[#0b1220] pl-[7px]">
            <PageIcon w={13} h={16} />
            <span className="ml-[6px] font-['Open_Sans','Noto_Sans',sans-serif] text-[16px] leading-6 tracking-[-0.49px] whitespace-nowrap text-[#808080]">
              <span className="text-black">localhost</span>:8888/GitHub/mass-datathon-cornish-rex.github.io/dc_massdrive3/dc_massdrive_BOSTON-1920x1080.html
            </span>
          </div>
          <main>
            <div className="flex">
              <div className="w-[1015px]">
                <div className="flex h-[73px] items-start pt-[29px] pl-[405px]">
                  <h1 className="w-[249px] text-[19px] leading-6 font-bold tracking-[0.13px] whitespace-nowrap">Boston Car Data Explorer -</h1>
                  <div className="mt-[4px] ml-[6px] flex h-[20px] w-[55px] items-center justify-between border border-[#a9a9a9] pr-[6px] pl-1">
                    <span className="text-[13px] tracking-[-0.2px]">2008</span>
                    <svg width={7} height={6} viewBox="0 0 7 6"><path d="M0 0H7L3.5 6Z" /></svg>
                  </div>
                </div>
                <BubbleChart />
                <div className="flex">
                  <VehType />
                  <Hybrid />
                  <Fuel />
                </div>
                <ModelYear />
              </div>
              <div className="pt-[88px] pl-[100px] text-[16px] leading-5 whitespace-nowrap">
                <p className="tracking-[-0.14px]">
                  <strong>Car Filters:</strong> <strong className="text-[#3182bd]">1,000</strong> selected out of{" "}
                  <strong className="text-[#3182bd]">1,000</strong> random records <a className="text-[#0000ee] underline">Reset All</a>
                </p>
                <p className="mt-[19px] mb-[11px] tracking-[-0.17px]">Click map to filter by zip codes</p>
                <CityMap />
              </div>
            </div>
            <MakeName />
          </main>
        </div>
      </div>
      <footer className="h-2 border-t border-b-2 border-t-[#1b3a5c] border-b-[#081426] bg-[linear-gradient(90deg,#16365f,#3d86c0_5%,#6fb0a0_6%,#2b76b5_8%,#3f8bc8_20%,#2570b2_40%,#3a8bcb_52%,#2270b4_58%,#3a86c6_70%,#1f67ae_76%,#a7cdee_77.5%,#1f67ae_79%,#2a74b8)]" />
    </div>
  );
}
